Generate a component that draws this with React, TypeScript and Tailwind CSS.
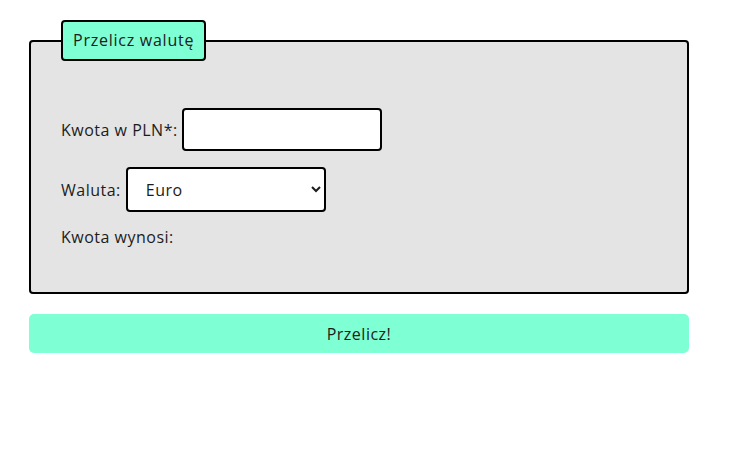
import React from 'react';

const App = () => {
  return (
    <div className="min-h-[469px] bg-white pt-[20px] pl-[29px] font-['Open_Sans',sans-serif] text-[16px] tracking-[0.5px] text-[#1c1c1c]">
      <form className="w-[660px]" onSubmit={(e) => e.preventDefault()}>
        <fieldset className="rounded-[4px] border-2 border-black bg-[#e4e4e4] pt-[47px] pr-[30px] pb-[45px] pl-[30px]">
          <legend className="rounded-[4px] border-2 border-black bg-[#7fffd4] px-[10px] py-[9px] leading-[19px] tracking-[0.75px]">
            Przelicz walutę
          </legend>

          <div className="flex items-center">
            <label htmlFor="kwota">Kwota w PLN*:</label>
            <input
              id="kwota"
              type="number"
              className="ml-[4px] h-[43px] w-[200px] rounded-[4px] border-2 border-black bg-white px-2 outline-none"
            />
          </div>

          <div className="mt-[16px] flex items-center">
            <label htmlFor="waluta">Waluta:</label>
            <select
              id="waluta"
              defaultValue="EUR"
              className="ml-[5px] h-[45px] w-[200px] rounded-[4px] border-2 border-black bg-white pl-[14px] pr-[6px] text-[16px]"
            >
              <option value="EUR">Euro</option>
              <option value="USD">Dolar amerykański</option>
              <option value="CHF">Frank szwajcarski</option>
            </select>
          </div>

          <p className="mt-[15px] leading-[20px]">Kwota wynosi:</p>
        </fieldset>

        <button
          type="submit"
          className="mt-[20px] h-[39px] w-full rounded-[5px] bg-[#7fffd4] text-center"
        >
          Przelicz!
        </button>
      </form>
    </div>
  );
};

export default App;
